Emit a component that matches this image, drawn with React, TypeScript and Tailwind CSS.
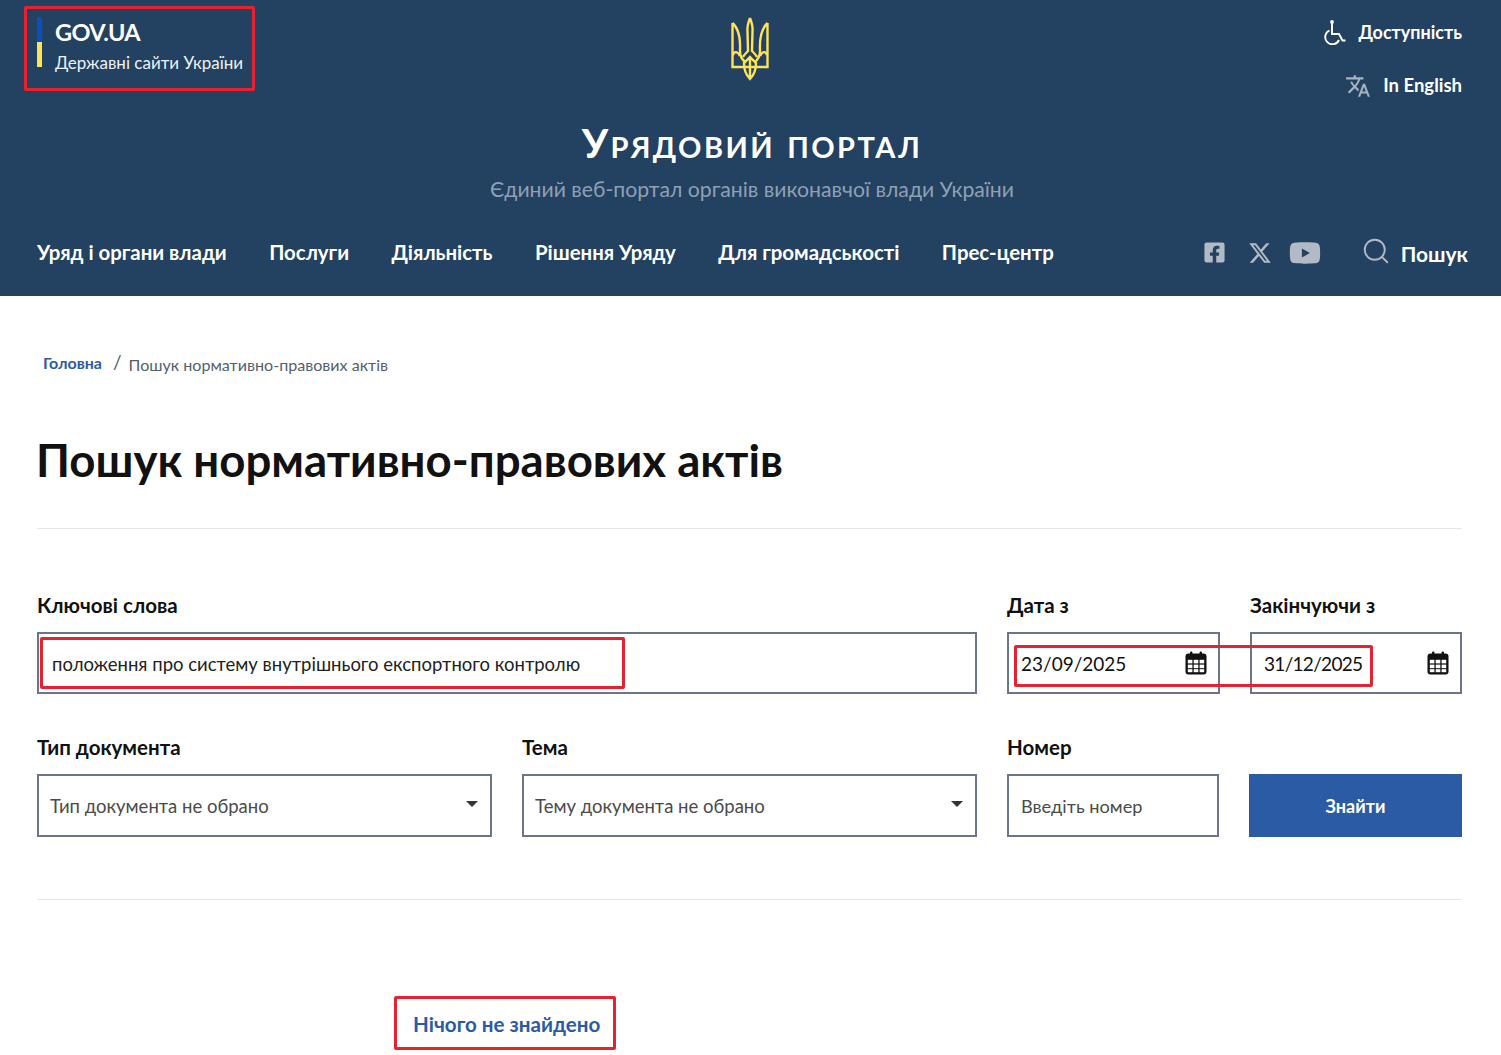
import { FaFacebookSquare, FaYoutube } from "react-icons/fa";
import { FaXTwitter } from "react-icons/fa6";
import { MdTranslate } from "react-icons/md";
import { LuSearch } from "react-icons/lu";

const font = "font-['Lato','Noto_Sans',sans-serif]";

function Trident() {
  return (
    <svg viewBox="0 0 38 64" className="h-[64px] w-[38px]" fill="none" stroke="#ffe358" strokeWidth="2.4">
      <path d="M1.5 6 V50 H13 M1.5 6 C8 12 9.5 22 9 33 C8.7 39 11 43 15 45.5" />
      <path d="M36.5 6 V50 H25 M36.5 6 C30 12 28.5 22 29 33 C29.3 39 27 43 23 45.5" />
      <path d="M19 1 C17 6 16 10 16.5 15 L17 34 C14 37 12.5 39 12 40 M19 1 C21 6 22 10 21.5 15 L21 34 C24 37 25.5 39 26 40" />
      <path d="M9 39 C6 33 3 35 2 38 M29 39 C32 33 35 35 36 38" />
      <path d="M13 46 C13 54 16 59 19 62 C22 59 25 54 25 46 C22 43 21 42 19 40 C17 42 16 43 13 46 Z M19 40 V62 M13 50 H25" />
    </svg>
  );
}

function WheelchairIcon() {
  return (
    <svg viewBox="0 0 22 26" className="h-[26px] w-[22px]" fill="none" stroke="#fff" strokeWidth="1.9">
      <circle cx="8" cy="3" r="1.9" fill="#fff" stroke="none" />
      <path d="M8 3 V15 H15 L18.5 21.5 H21.5" />
      <path d="M5.5 11.5 A7.2 7.2 0 1 0 15 21" />
    </svg>
  );
}

function CalendarIcon() {
  return (
    <svg viewBox="0 0 22 24" className="h-6 w-[22px]">
      <rect x="5" y="0.5" width="2.4" height="5" rx="1" fill="#111" />
      <rect x="14.6" y="0.5" width="2.4" height="5" rx="1" fill="#111" />
      <rect x="0.5" y="2.5" width="21" height="21" rx="3" fill="#111" />
      <rect x="2.8" y="8.8" width="4.6" height="3.6" fill="#fff" />
      <rect x="8.7" y="8.8" width="4.6" height="3.6" fill="#fff" />
      <rect x="14.6" y="8.8" width="4.6" height="3.6" fill="#fff" />
      <rect x="2.8" y="13.6" width="4.6" height="3.6" fill="#fff" />
      <rect x="8.7" y="13.6" width="4.6" height="3.6" fill="#fff" />
      <rect x="14.6" y="13.6" width="4.6" height="3.6" fill="#fff" />
      <rect x="2.8" y="18.2" width="4.6" height="3" fill="#fff" />
      <rect x="8.7" y="18.2" width="4.6" height="3" fill="#fff" />
      <rect x="14.6" y="18.2" width="4.6" height="3" fill="#fff" />
    </svg>
  );
}

function Label({ children }: { children: React.ReactNode }) {
  return <div className="mb-[13px] h-[27px] text-[20.5px] font-bold leading-[27px] text-[#111]">{children}</div>;
}

function SelectBox({ text }: { text: string }) {
  return (
    <div className="flex h-[63px] items-center justify-between border-2 border-[#6b7589] pl-[11px] pr-[12px] text-[18.5px] text-[#4b4b4b]">
      <span className="mt-[3px]">{text}</span>
      <span className="mb-[2px] h-0 w-0 border-x-[6px] border-t-[6px] border-x-transparent border-t-[#333]" />
    </div>
  );
}

function DateBox({ value, className }: { value: string; className?: string }) {
  return (
    <div className="mt-px flex h-[62px] items-center justify-between border-2 border-[#6b7589] pl-[12px] pr-[11px] text-[19px] text-[#111]">
      <span className={`mt-[3px] ${className ?? ""}`}>{value}</span>
      <CalendarIcon />
    </div>
  );
}

export default function App() {
  const nav = ["Уряд і органи влади", "Послуги", "Діяльність", "Рішення Уряду", "Для громадськості", "Прес-центр"];

  return (
    <div className={`relative h-[1055px] overflow-hidden bg-white ${font}`}>
      <header className="h-[296px] bg-[#234161] pl-[37px] pr-[39px] text-white">
        <div className="grid h-[110px] grid-cols-3">
          <div className="flex items-start pt-[17px]">
            <div className="mr-[13px] h-[50px] w-[5px]">
              <div className="h-[25px] bg-[#0b4fbf]" />
              <div className="h-[25px] bg-[#ffe358]" />
            </div>
            <div>
              <div className="text-[23.5px] font-bold leading-[30px] tracking-[-0.6px]">GOV.UA</div>
              <div className="mt-[3px] whitespace-nowrap text-[17px] leading-[26px] text-[#eef1f4]">Державні сайти України</div>
            </div>
          </div>
          <div className="flex justify-center pt-[17px]">
            <Trident />
          </div>
          <div className="flex flex-col items-end pt-[17px]">
            <div className="flex h-[30px] items-center gap-[12px] text-[18px] font-bold">
              <WheelchairIcon />
              Доступність
            </div>
            <div className="mt-[24px] flex h-[30px] items-center gap-[12px] text-[18.5px] font-bold">
              <MdTranslate className="size-[26px] text-[#a9b3c0]" />
              In English
            </div>
          </div>
        </div>
        <div className="mt-[8px] pl-[5px] text-center text-[41px] font-bold leading-[50px] tracking-[2.4px] [font-variant:small-caps]">
          Урядовий портал
        </div>
        <div className="mt-[7px] pl-[5px] text-center text-[21.2px] leading-[28px] text-[#8fa0b3]">
          Єдиний веб-портал органів виконавчої влади України
        </div>
        <nav className="mt-[33px] flex items-center">
          <div className="flex gap-[42.5px] text-[20.4px] font-bold">
            {nav.map((item) => (
              <span key={item}>{item}</span>
            ))}
          </div>
          <div className="ml-auto -mr-[6px] flex items-center text-[#b2bac5]">
            <FaFacebookSquare className="size-[23px]" />
            <FaXTwitter className="ml-[22px] size-[24px]" />
            <FaYoutube className="ml-[17px] size-[32px]" />
            <LuSearch className="ml-[40px] size-[30px] -mt-1" strokeWidth={1.5} />
            <span className="ml-[10px] mt-[2px] text-[21px] font-bold text-white">Пошук</span>
          </div>
        </nav>
      </header>

      <main className="pl-[37px] pr-[39px]">
        <div className="flex items-center pt-[52px] pl-[6px]">
          <span className="text-[16px] font-bold text-[#2c5ba6]">Головна</span>
          <span className="ml-[11px] text-[19px] text-[#4f5b6b]">/</span>
          <span className="ml-[7px] mt-[5px] text-[16.1px] text-[#555f6d]">Пошук нормативно-правових актів</span>
        </div>
        <h1 className="mt-[50.5px] -ml-px text-[45.6px] font-bold leading-[64px] text-[#111]">Пошук нормативно-правових актів</h1>
        <div className="mt-[36px] border-t border-[#e4e6e9]" />

        <div className="mt-[63px] grid grid-cols-[455px_455px_213px_212px] gap-x-[30px] gap-y-[40px]">
          <div className="col-span-2">
            <Label>Ключові слова</Label>
            <div className="mt-px flex h-[62px] items-center border-2 border-[#6b7589] pl-[13px] text-[18.5px] text-[#222]">
              <span className="mt-[5px]">положення про систему внутрішнього експортного контролю</span>
            </div>
          </div>
          <div>
            <Label>Дата з</Label>
            <DateBox value="23/09/2025" />
          </div>
          <div>
            <Label>Закінчуючи з</Label>
            <DateBox value="31/12/2025" className="tracking-[-0.7px]" />
          </div>
          <div>
            <Label>Тип документа</Label>
            <SelectBox text="Тип документа не обрано" />
          </div>
          <div>
            <Label>Тема</Label>
            <SelectBox text="Тему документа не обрано" />
          </div>
          <div>
            <Label>Номер</Label>
            <div className="flex h-[63px] w-[212px] items-center border-2 border-[#6b7589] pl-[12px] text-[18.2px] text-[#4b4b4b]">
              <span className="mt-[3px]">Введіть номер</span>
            </div>
          </div>
          <div className="-ml-px flex flex-col justify-end">
            <button className="h-[63px] bg-[#2c5ba6] pt-[2px] text-[18px] font-bold text-white">Знайти</button>
          </div>
        </div>
        <div className="mt-[62px] border-t border-[#e4e6e9]" />
        <div className="mt-[109px] pl-[376px] text-[20.6px] font-bold text-[#2c5ba6]">Нічого не знайдено</div>
      </main>

      {/* red marks drawn over the page */}
      <div className="absolute left-[24px] top-[6px] h-[85px] w-[231px] rounded-[2px] border-[3px] border-[#e8212e]" />
      <div className="absolute left-[40px] top-[637px] h-[52px] w-[585px] rounded-[2px] border-[3px] border-[#e8212e]" />
      <div className="absolute left-[1014px] top-[645px] h-[42px] w-[359px] rounded-[2px] border-[3px] border-[#e8212e]" />
      <div className="absolute left-[394px] top-[996px] h-[54px] w-[222px] rounded-[2px] border-[3px] border-[#e8212e]" />
    </div>
  );
}
